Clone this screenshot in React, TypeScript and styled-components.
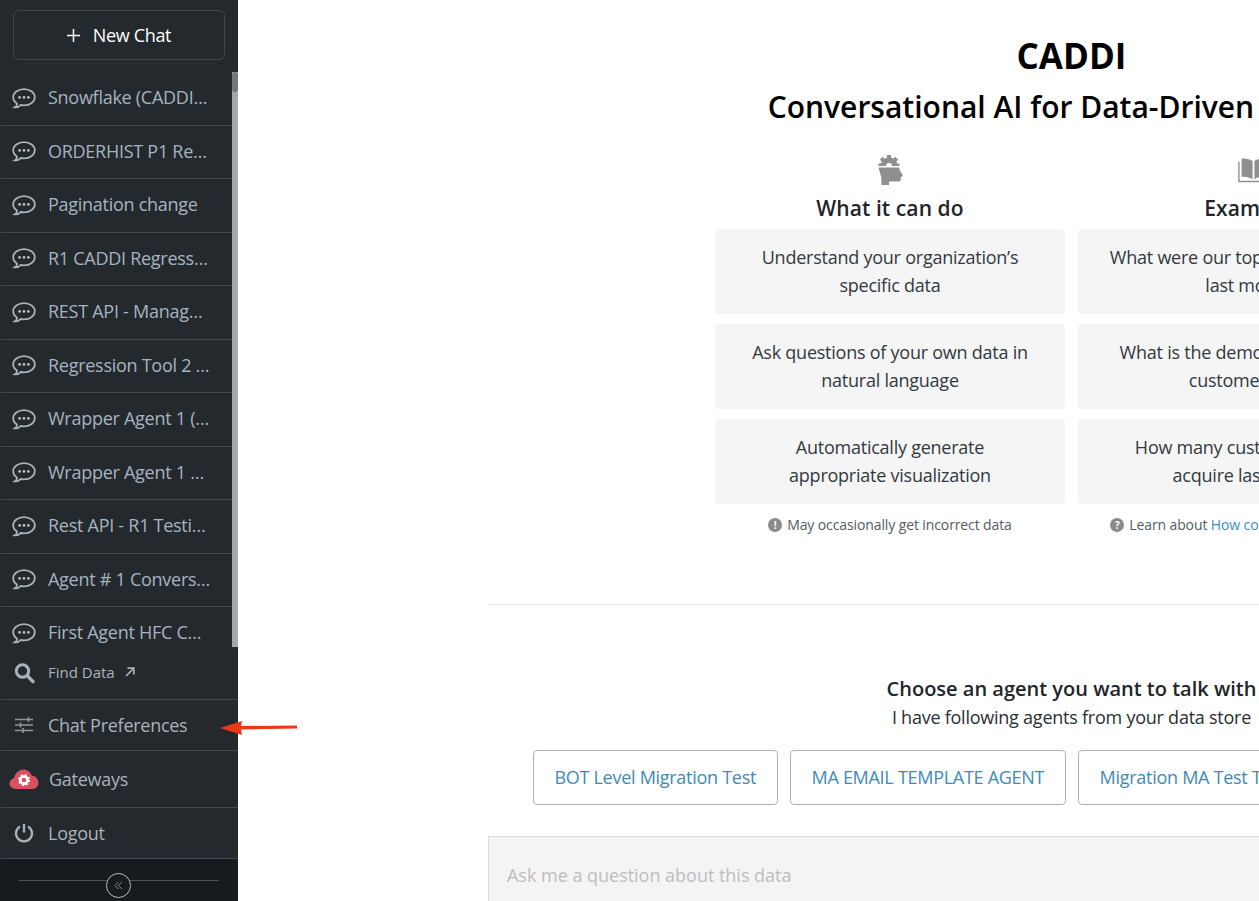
import React from "react";
import styled, { createGlobalStyle } from "styled-components";

const Global = createGlobalStyle`
  html, body { margin: 0; padding: 0; height: 100%; overflow: hidden; background: #fff; }
  body { font-family: "Open Sans", "Liberation Sans", sans-serif; }
  * { box-sizing: border-box; }
`;
const Page = styled.div`
  display: flex; width: 1259px; height: 901px; overflow: hidden; position: relative;
`;
const Sidebar = styled.aside`
  width: 238px; flex: none; height: 901px; background: #24292d; display: flex; flex-direction: column;
`;
const NewWrap = styled.div`
  height: 72px; padding: 10px 13px 0 13px;
`;
const NewChat = styled.button`
  width: 212px; height: 50px; border: 1px solid #3e474d; border-radius: 6px; background: transparent; color: #fff;
  font: 400 18px "Open Sans", sans-serif; letter-spacing: -0.35px; display: flex; align-items: center; justify-content: center; gap: 13px; padding: 0;
`;
const ListArea = styled.div`
  height: 575px; display: flex; overflow: hidden; flex: none;
`;
const List = styled.div`
  width: 232px; flex: none; display: flex; flex-direction: column;
`;
const Track = styled.div`
  width: 6px; flex: none; background: #a8a8a8; height: 575px;
`;
const Thumb = styled.div`
  width: 6px; height: 20px; background: #787878; border-radius: 3px;
`;
const ChatRow = styled.div`
  height: 53.5px; flex: none; margin-left: 1px; border-bottom: 1px solid #414a50; display: flex; align-items: center; padding-left: 11px; gap: 13px;
  color: #a5b4c0; font-size: 18px; letter-spacing: -0.27px; white-space: nowrap;
`;
const ChatTitle = styled.span`
  width: 163px; overflow: hidden; text-overflow: ellipsis; margin: 0 0 2px -1px;
`;
const NavRow = styled.div<{ $h: number; $gap?: number; $pad?: number }>`
  height: ${p => p.$h}px; flex: none; margin-left: 1px; border-bottom: 1px solid #414a50; display: flex; align-items: center;
  padding-left: ${p => p.$pad ?? 11}px; gap: ${p => p.$gap ?? 12}px; color: #a9b2b8; font-size: 18px; letter-spacing: -0.27px;
`;
const FindLabel = styled.span`
  display: flex; align-items: center; gap: 10px; margin-bottom: 2px; font-size: 15px; letter-spacing: 0;
`;
const NavText = styled.span`
  margin-bottom: 1px;
`;
const Footer = styled.div`
  flex: 1; background: #161b1e; position: relative; display: flex; align-items: center; justify-content: center; padding-top: 1px;
`;
const FooterLine = styled.div`
  width: 200px; height: 1px; background: #48535a;
`;
const Collapse = styled.div`
  position: absolute; left: 106px; top: 14px; width: 25px; height: 25px; border-radius: 50%; border: 1px solid #b5bcc0; background: #161b1e;
  display: flex; align-items: center; justify-content: center;
`;
const Main = styled.main`
  width: 1167px; flex: none; margin-left: 250px; display: flex; flex-direction: column; align-items: stretch;
`;
const Hero = styled.section`
  height: 605px; border-bottom: 1px solid #e8e8e8; display: flex; flex-direction: column; align-items: center; width: 1167px;
`;
const Title = styled.h1`
  width: 713px; margin: 33px 0 0 0; text-align: center; font-size: 35px; line-height: 46px; font-weight: 700; color: #000;
`;
const Subtitle = styled.h2`
  width: 713px; margin: 6px 0 0 0; white-space: nowrap; text-align: center; font-size: 30px; line-height: 44px; font-weight: 600; color: #000;
`;
const Columns = styled.div`
  display: grid; grid-template-columns: 350px 350px; gap: 13px; margin: 25px 0 0 0; width: 713px;
`;
const Column = styled.div`
  display: flex; flex-direction: column; align-items: center;
`;
const ColIcon = styled.div`
  height: 32px; display: flex; align-items: center; justify-content: center;
`;
const ColHead = styled.h3`
  margin: 7px 0 6px; font-size: 21px; line-height: 30px; font-weight: 600; color: #212529; white-space: nowrap; letter-spacing: 0.1px;
`;
const Card = styled.div`
  width: 350px; height: 85px; margin-bottom: 10px; border-radius: 4px; background: #f5f5f5; display: flex; align-items: center; justify-content: center; text-align: center;
  padding: 0 31.5px 2px; font-size: 18px; line-height: 28px; color: #33393f; letter-spacing: -0.24px;
`;
const Note = styled.div`
  display: flex; align-items: center; gap: 5px; font-size: 14px; line-height: 20px; color: #555b61; margin-top: 1px; white-space: nowrap; letter-spacing: -0.11px;
`;
const Dot = styled.span`
  width: 14px; height: 14px; border-radius: 50%; background: #8a8a8a; color: #fff; font-size: 10px; font-weight: 700; display: inline-flex; align-items: center; justify-content: center;
`;
const Link = styled.a`
  color: #3c8cc8;
`;
const Agents = styled.section`
  height: 231px; flex: none; display: flex; flex-direction: column; align-items: center;
`;
const AgentHead = styled.div`
  margin: 70px 0 0 0; font-size: 20px; line-height: 28px; font-weight: 600; color: #212529; white-space: nowrap;
`;
const AgentSub = styled.div`
  font-size: 18px; line-height: 28px; color: #2a2f33; white-space: nowrap; letter-spacing: -0.24px;
`;
const AgentRow = styled.div`
  display: flex; gap: 12.6px; margin-top: 19px; align-self: flex-start; margin-left: 45px;
`;
const AgentBtn = styled.button`
  height: 55px; flex: none; background: #fff; border: 1px solid #b3b3b3; border-radius: 4px; color: #3d8ab8;
  font: 400 18px "Open Sans", sans-serif; letter-spacing: -0.28px; padding: 0 20.4px 2px; white-space: nowrap;
`;
const InputBox = styled.div`
  height: 65px; flex: none; background: #f4f4f4; border: 1px solid #dadada; border-bottom: none; padding: 12px 18px 0 18px; display: flex; align-items: center;
  font-size: 18px; color: #bdbdbd; letter-spacing: -0.02px;
`;
const ArrowAnno = styled.svg`
  position: absolute; left: 218px; top: 716px;
`;
const IconSlot = styled.span<{ $w?: number }>`
  width: ${p => p.$w ?? 24}px; flex: none; display: inline-flex; justify-content: center;
`;

const Bubble = () => (
  <svg width="24" height="21" viewBox="0 0 24 21" fill="none">
    <path d="M12 1.200C5.900 1.200 1.200 4.800 1.200 9.300c0 2.500 1.400 4.700 3.700 6.200.2 1.500-.6 3-2 3.800 2.300.2 4.400-.6 5.700-2.300 1.100.2 2.200.4 3.400.4 6.100 0 10.800-3.600 10.800-8.100S18.100 1.200 12 1.200z" stroke="#a9b2b8" strokeWidth="1.800" />
    <circle cx="7.600" cy="9.400" r="1.400" fill="#b4bcc2" /><circle cx="12" cy="9.400" r="1.400" fill="#b4bcc2" /><circle cx="16.400" cy="9.400" r="1.400" fill="#b4bcc2" />
  </svg>
);

const chats = ["Snowflake (CADDI Agent)", "ORDERHIST P1 Regression", "Pagination change", "R1 CADDI Regression Test", "REST API - Management", "Regression Tool 2 Agents", "Wrapper Agent 1 (Testing)", "Wrapper Agent 1 Conversation", "Rest API - R1 Testing Agent", "Agent # 1 Conversation", "First Agent HFC Conversation"];
const canDo = ["Understand your organization’s specific data", "Ask questions of your own data in natural language", "Automatically generate appropriate visualization"];
const examples = ["What were our top selling products last month?", "What is the demographic of your customer base?", "How many customers did we acquire last month?"];

export default function App() {
  return (
    <Page>
      <Global />
      <Sidebar>
        <NewWrap>
          <NewChat>
            <svg width="13" height="13" viewBox="0 0 13 13"><path d="M6.500 0v13M0 6.500h13" stroke="#fff" strokeWidth="1.500" /></svg>
            New Chat
          </NewChat>
        </NewWrap>
        <ListArea>
          <List>
            {chats.map(c => (
              <ChatRow key={c}><IconSlot><Bubble /></IconSlot><ChatTitle>{c}</ChatTitle></ChatRow>
            ))}
          </List>
          <Track><Thumb /></Track>
        </ListArea>
        <NavRow $h={53}>
          <IconSlot>
            <svg width="22" height="22" viewBox="0 0 22 22" fill="none"><circle cx="9.500" cy="9" r="6.200" stroke="#a9b2b8" strokeWidth="3" /><path d="M14.300 13.800 L20 19.600" stroke="#a9b2b8" strokeWidth="3.400" strokeLinecap="round" /></svg>
          </IconSlot>
          <FindLabel>Find Data
            <svg width="10" height="10" viewBox="0 0 10 10" fill="none"><path d="M1 9 8.500 1.500M2.500 1.200h6.300v6.300" stroke="#a9b2b8" strokeWidth="1.700" /></svg>
          </FindLabel>
        </NavRow>
        <NavRow $h={51}>
          <IconSlot>
            <svg width="18" height="16" viewBox="0 0 18 16" fill="none" stroke="#8d979d" strokeWidth="1.300"><path d="M0 2.500h18M0 8h18M0 13.500h18" /><path d="M13.500 0v5M5.500 5.500v5M8 11v5" strokeWidth="1.600" /></svg>
          </IconSlot>
          <NavText>Chat Preferences</NavText>
        </NavRow>
        <NavRow $h={57} $pad={8} $gap={10}>
          <IconSlot $w={30}>
            <svg width="30" height="22" viewBox="0 0 30 22"><path d="M6.500 21C3 21 .5 18.700.5 15.600c0-2.700 1.800-4.800 4.400-5.300C6 5.400 9.900 1.500 14.500 1.500c3.800 0 7 2.400 8.200 5.900 3.600.3 6.800 3.500 6.800 7.300 0 3.500-2.700 6.300-6.200 6.300z" fill="#d9505f" /><circle cx="15" cy="12" r="3.600" fill="none" stroke="#fff" strokeWidth="2.800" /><circle cx="15" cy="12" r="5.200" fill="none" stroke="#fff" strokeWidth="1.600" strokeDasharray="2 2.100" /></svg>
          </IconSlot>
          <NavText>Gateways</NavText>
        </NavRow>
        <NavRow $h={51}>
          <IconSlot>
            <svg width="20" height="20" viewBox="0 0 20 20" fill="none" stroke="#a9b2b8" strokeWidth="2.300"><path d="M6 3.400a8 8 0 1 0 8 0" /><path d="M10 1v8.500" /></svg>
          </IconSlot>
          <NavText>Logout</NavText>
        </NavRow>
        <Footer>
          <FooterLine />
          <Collapse>
            <svg width="9" height="9" viewBox="0 0 9 9" fill="none" stroke="#7d868c" strokeWidth="1"><path d="M4.500 1 1 4.500 4.500 8M8 1 4.500 4.500 8 8" /></svg>
          </Collapse>
        </Footer>
      </Sidebar>
      <Main>
        <Hero>
          <Title>CADDI</Title>
          <Subtitle>Conversational AI for Data-Driven Insights</Subtitle>
          <Columns>
            <Column>
              <ColIcon>
                <svg width="25" height="30" viewBox="0 0 25 30" fill="#8f8f8f">
                  <path fillRule="evenodd" d="M2.500 11a8.500 8.500 0 0 1 17 0zM8 11a3 3 0 0 1 6 0z" />
                  <rect x="9" y="0" width="4" height="4" />
                  <rect x="9" y="0" width="4" height="4" transform="rotate(-45 11 11)" />
                  <rect x="9" y="0" width="4" height="4" transform="rotate(45 11 11)" />
                  <rect x="0.500" y="8.500" width="3" height="2.500" />
                  <rect x="18.500" y="8.500" width="3" height="2.500" />
                  <path d="M.5 12.500h20.500l1.200 3.500 2.800 4.500-2.400 2 .3 2.500-1.400 1.500H11V30H3.500l-.3-8z" />
                </svg>
              </ColIcon>
              <ColHead>What it can do</ColHead>
              {canDo.map(t => <Card key={t}>{t}</Card>)}
              <Note><Dot>!</Dot>May occasionally get incorrect data</Note>
            </Column>
            <Column>
              <ColIcon>
                <svg width="31" height="25" viewBox="0 0 34 26" fill="#8f8f8f">
                  <path d="M4 0c4-.5 9 .5 12 2.500v20c-3-2-8-3-12-2.500z" /><path d="M18 2.500C21 .5 26-.5 30 0v20c-4-.5-9 .5-12 2.500z" /><path d="M1 3.500v21.500h32V3.500" fill="none" stroke="#8f8f8f" strokeWidth="1.500" />
                </svg>
              </ColIcon>
              <ColHead>Examples</ColHead>
              {examples.map(t => <Card key={t}>{t}</Card>)}
              <Note><Dot>?</Dot><span>Learn about <Link>How conversational AI works</Link></span></Note>
            </Column>
          </Columns>
        </Hero>
        <Agents>
          <AgentHead>Choose an agent you want to talk with</AgentHead>
          <AgentSub>I have following agents from your data store</AgentSub>
          <AgentRow>
            <AgentBtn>BOT Level Migration Test</AgentBtn>
            <AgentBtn>MA EMAIL TEMPLATE AGENT</AgentBtn>
            <AgentBtn>Migration MA Test Template</AgentBtn>
          </AgentRow>
        </Agents>
        <InputBox>Ask me a question about this data</InputBox>
      </Main>
      <ArrowAnno width="80" height="22" viewBox="0 0 80 22">
        <path d="M2 12 L24 5 L23 10 L79 9.500 L79 12.500 L23 13.500 L24 19 Z" fill="#e93a17" />
      </ArrowAnno>
    </Page>
  );
}
